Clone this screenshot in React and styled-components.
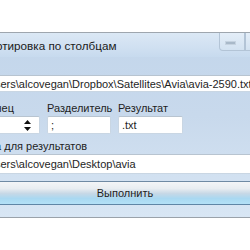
import styled, { createGlobalStyle } from "styled-components";

const GlobalStyle = createGlobalStyle`
  html, body {
    margin: 0;
    padding: 0;
    background: #ffffff;
    overflow: hidden;
  }
  body {
    font-family: "Liberation Sans", Arial, sans-serif;
    font-size: 11px;
    color: #1e1e1e;
  }
`;

const Desktop = styled.div`
  width: 250px;
  height: 250px;
  padding-top: 32px;
  box-sizing: border-box;
  overflow: hidden;
`;

const Window = styled.div`
  margin-left: -46px;
  width: 365px;
  border-top: 1px solid #9ea6ae;
  border-bottom: 1px solid #9aa2aa;
  background: linear-gradient(to bottom, #c3d6eb 0%, #c8d9ec 45%, #d8e6f4 100%);
`;

const TitleBar = styled.div`
  height: 24px;
  display: flex;
  align-items: flex-start;
  background: linear-gradient(to bottom, #dbe8f5 0%, #d0e0f1 60%, #c7daee 100%);
`;

const Title = styled.div`
  margin-left: 27px;
  margin-top: 6px;
  flex: 1;
  white-space: nowrap;
  font-size: 11.7px;
  color: #1b1b1b;
`;

const Controls = styled.div`
  display: flex;
  margin-right: 6px;
`;

const CtrlButton = styled.div`
  width: ${(p) => p.w}px;
  height: 18px;
  box-sizing: border-box;
  border: 1px solid #b3c4d6;
  border-top: none;
  background: linear-gradient(to bottom, #e4eef8, #d3e2f1);
  display: flex;
  align-items: center;
  justify-content: center;
  &:first-child {
    border-bottom-left-radius: 4px;
  }
`;

const MinGlyph = styled.div`
  width: 9px;
  height: 2px;
  margin-top: 3px;
  margin-right: 3px;
  background: #a9b9c9;
  border: 1px solid #c6d3e0;
`;

const Client = styled.div`
  padding: 0 8px 12px 15px;
  display: flex;
  flex-direction: column;
`;

const TextField = styled.div`
  height: 18px;
  box-sizing: border-box;
  background: #ffffff;
  border: 1px solid #c9d6e3;
  border-top-color: #b8c4d0;
  border-radius: 2px;
  padding: 0 3px;
  display: flex;
  align-items: center;
  white-space: nowrap;
  overflow: hidden;
  position: relative;
`;

const PathField = styled(TextField)`
  margin-top: 18px;
  height: 17px;
`;

const Row = styled.div`
  display: flex;
  gap: 7px;
  margin-top: 9px;
  padding-left: 14px;
`;

const Column = styled.div`
  width: ${(p) => p.w}px;
  display: flex;
  flex-direction: column;
`;

const Label = styled.div`
  height: 15px;
  line-height: 15px;
  white-space: nowrap;
  color: #1e1e1e;
`;

const SpinArrows = styled.div`
  position: absolute;
  right: 8px;
  top: 3px;
  display: flex;
  flex-direction: column;
  gap: 3px;
`;

const OutLabel = styled(Label)`
  margin-top: 5px;
  margin-left: 1px;
`;

const OutField = styled(TextField)`
  height: 20px;
`;

const ExecButton = styled.div`
  margin: 7px -20px 0 -30px;
  height: 24px;
  box-sizing: border-box;
  border-top: 1px solid #6f8aa3;
  border-bottom: 1px solid #5f86a6;
  background: linear-gradient(
    to bottom,
    #f3f5f7 0%,
    #e8edf1 30%,
    #c7d8e6 52%,
    #a9d8f1 75%,
    #b3e1f7 100%
  );
  display: flex;
  align-items: center;
  justify-content: center;
  padding-right: 20px;
  color: #1e1e1e;
`;

const Up = () => (
  <svg width="7" height="4" viewBox="0 0 7 4">
    <path d="M0 4 L3.5 0 L7 4 Z" fill="#111" />
  </svg>
);

const Down = () => (
  <svg width="7" height="4" viewBox="0 0 7 4">
    <path d="M0 0 L3.5 4 L7 0 Z" fill="#111" />
  </svg>
);

export default function App() {
  return (
    <>
      <GlobalStyle />
      <Desktop>
        <Window>
          <TitleBar>
            <Title>Сортировка по столбцам</Title>
            <Controls>
              <CtrlButton w={26}>
                <MinGlyph />
              </CtrlButton>
              <CtrlButton w={25} />
              <CtrlButton w={43} />
            </Controls>
          </TitleBar>
          <Client>
            <PathField>C:\Users\alcovegan\Dropbox\Satellites\Avia\avia-2590.txt</PathField>
            <Row>
              <Column w={57}>
                <Label>Конец</Label>
                <TextField>
                  1
                  <SpinArrows>
                    <Up />
                    <Down />
                  </SpinArrows>
                </TextField>
              </Column>
              <Column w={64}>
                <Label>Разделитель</Label>
                <TextField>;</TextField>
              </Column>
              <Column w={65}>
                <Label>Результат</Label>
                <TextField>.txt</TextField>
              </Column>
            </Row>
            <OutLabel>Папка для результатов</OutLabel>
            <OutField>C:\Users\alcovegan\Desktop\avia</OutField>
            <ExecButton>Выполнить</ExecButton>
          </Client>
        </Window>
      </Desktop>
    </>
  );
}
